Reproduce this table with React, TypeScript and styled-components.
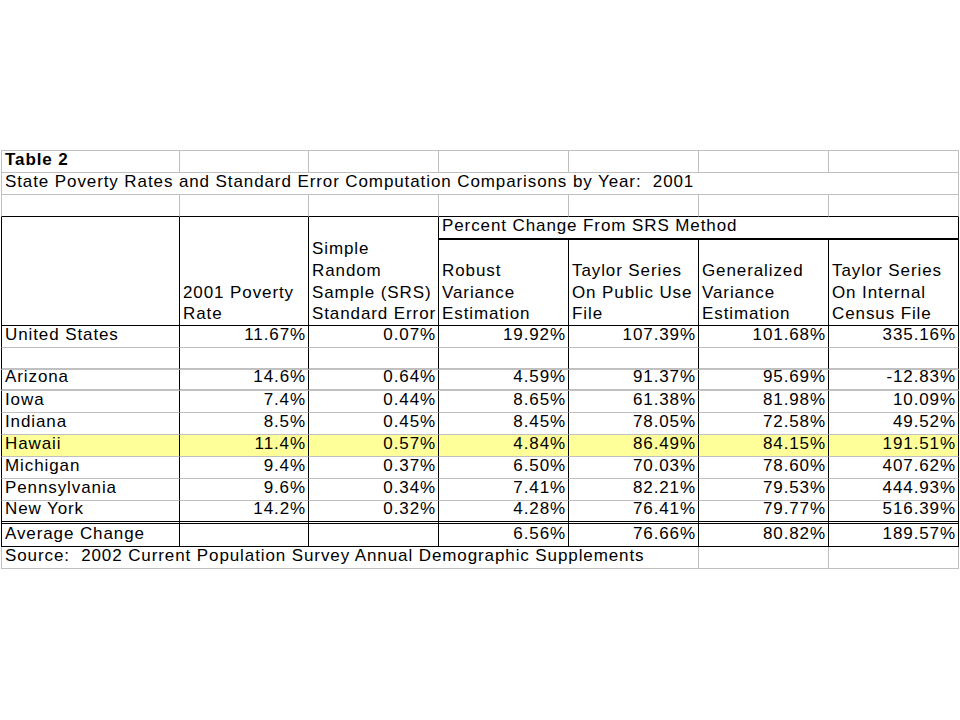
import React from "react";
import styled, { createGlobalStyle } from "styled-components";

type Edge = "g" | "g2" | "k" | "k2" | "dbl" | "none";

const edgeCss = (e: Edge = "none") => {
  switch (e) {
    case "g":
      return "1px solid #c0c0c0";
    case "g2":
      return "2px solid #c0c0c0";
    case "k":
      return "1px solid #000";
    case "k2":
      return "2px solid #000";
    case "dbl":
      return "3px double #000";
    default:
      return "0";
  }
};

///////////////////////
// CSS
///////////////////////
const GlobalStyle = createGlobalStyle`
  html, body {
    margin: 0;
    background: #fff;
  }
  body {
    font-family: "Liberation Sans", Arial, sans-serif;
    color: #000;
  }
`;

const Page = styled.div`
  width: 960px;
  height: 720px;
  padding: 150px 0 0 1px;
  box-sizing: border-box;
`;

const Sheet = styled.table`
  border-collapse: separate;
  border-spacing: 0;
  table-layout: fixed;
  width: 958px;
  font-size: 17px;
  letter-spacing: 0.9px;
`;

const Col = styled.col<{ $w: number }>`
  width: ${(p) => p.$w}px;
`;

const Row = styled.tr<{ $h: number; $hl?: boolean }>`
  height: ${(p) => p.$h}px;
  background: ${(p) => (p.$hl ? "#ffff99" : "transparent")};
`;

const Cell = styled.td<{
  $t?: Edge;
  $r?: Edge;
  $b?: Edge;
  $l?: Edge;
  $num?: boolean;
  $bold?: boolean;
  $head?: boolean;
}>`
  border-top: ${(p) => edgeCss(p.$t)};
  border-right: ${(p) => edgeCss(p.$r)};
  border-bottom: ${(p) => edgeCss(p.$b)};
  border-left: ${(p) => edgeCss(p.$l)};
  padding: 0 ${(p) => (p.$num ? "2px" : "3px")} ${(p) => (p.$head ? "0" : "5px")} 3px;
  line-height: ${(p) => (p.$head ? "21.7px" : "14px")};
  vertical-align: bottom;
  text-align: ${(p) => (p.$num ? "right" : "left")};
  font-weight: ${(p) => (p.$bold ? 700 : 400)};
  white-space: nowrap;
  overflow: visible;
`;
///////////////////////
// end CSS
///////////////////////

const unitedStates = ["United States", "11.67%", "0.07%", "19.92%", "107.39%", "101.68%", "335.16%"];

const states = [
  { v: ["Arizona", "14.6%", "0.64%", "4.59%", "91.37%", "95.69%", "-12.83%"], h: 21, b: "g2" as Edge },
  { v: ["Iowa", "7.4%", "0.44%", "8.65%", "61.38%", "81.98%", "10.09%"], h: 22, b: "g" as Edge },
  { v: ["Indiana", "8.5%", "0.45%", "8.45%", "78.05%", "72.58%", "49.52%"], h: 22, b: "g" as Edge },
  { v: ["Hawaii", "11.4%", "0.57%", "4.84%", "86.49%", "84.15%", "191.51%"], h: 22, b: "g" as Edge, hl: true },
  { v: ["Michigan", "9.4%", "0.37%", "6.50%", "70.03%", "78.60%", "407.62%"], h: 22, b: "g" as Edge },
  { v: ["Pennsylvania", "9.6%", "0.34%", "7.41%", "82.21%", "79.53%", "444.93%"], h: 22, b: "g" as Edge },
  { v: ["New York", "14.2%", "0.32%", "4.28%", "76.41%", "79.77%", "516.39%"], h: 23, b: "dbl" as Edge },
];

const averageChange = ["Average Change", "", "", "6.56%", "76.66%", "80.82%", "189.57%"];

const subHeads = [
  ["Robust", "Variance", "Estimation"],
  ["Taylor Series", "On Public Use", "File"],
  ["Generalized", "Variance", "Estimation"],
  ["Taylor Series", "On Internal", "Census File"],
];

const widths = [179, 129, 130, 130, 130, 130, 130];

const Lines = ({ lines }: { lines: string[] }) => (
  <>
    {lines.map((l, i) => (
      <React.Fragment key={i}>
        {i > 0 && <br />}
        {l}
      </React.Fragment>
    ))}
  </>
);

const DataRow = ({ values, h, b, hl }: { values: string[]; h: number; b: Edge; hl?: boolean }) => (
  <Row $h={h} $hl={hl}>
    {values.map((v, i) => (
      <Cell key={i} $l={i === 0 ? "k" : "none"} $r="k" $b={b} $num={i > 0}>
        {v}
      </Cell>
    ))}
  </Row>
);

const App = () => {
  return (
    <Page>
      <GlobalStyle />
      <Sheet>
        <colgroup>
          {widths.map((w, i) => (
            <Col key={i} $w={w} />
          ))}
        </colgroup>
        <tbody>
          {/* title rows */}
          <Row $h={23}>
            {widths.map((_, i) => (
              <Cell key={i} $t="g" $l={i === 0 ? "g" : "none"} $r="g" $b="g" $bold={i === 0}>
                {i === 0 ? "Table 2" : ""}
              </Cell>
            ))}
          </Row>
          <Row $h={22}>
            <Cell colSpan={7} $l="g" $r="g" $b="g">
              State Poverty Rates and Standard Error Computation Comparisons by Year:{"\u00a0\u00a0"}2001
            </Cell>
          </Row>
          <Row $h={22}>
            {widths.map((_, i) => (
              <Cell key={i} $l={i === 0 ? "g" : "none"} $r="g" $b="k" />
            ))}
          </Row>

          {/* column headers */}
          <Row $h={23}>
            <Cell rowSpan={2} $l="k" $r="k" $b="k" />
            <Cell rowSpan={2} $r="k" $b="k" $head>
              <Lines lines={["2001 Poverty", "Rate"]} />
            </Cell>
            <Cell rowSpan={2} $r="k" $b="k" $head>
              <Lines lines={["Simple", "Random", "Sample (SRS)", "Standard Error"]} />
            </Cell>
            <Cell colSpan={4} $r="k" $b="k2">
              Percent Change From SRS Method
            </Cell>
          </Row>
          <Row $h={86}>
            {subHeads.map((s, i) => (
              <Cell key={i} $r="k" $b="k" $head>
                <Lines lines={s} />
              </Cell>
            ))}
          </Row>

          {/* data */}
          <DataRow values={unitedStates} h={22} b="g" />
          <DataRow values={["", "", "", "", "", "", ""]} h={22} b="g2" />
          {states.map((s) => (
            <DataRow key={s.v[0]} values={s.v} h={s.h} b={s.b} hl={s.hl} />
          ))}
          <DataRow values={averageChange} h={23} b="k" />

          {/* source */}
          <Row $h={22}>
            <Cell colSpan={5} $l="g" $r="g" $b="g">
              Source:{"\u00a0\u00a0"}2002 Current Population Survey Annual Demographic Supplements
            </Cell>
            <Cell $r="g" $b="g" />
            <Cell $r="g" $b="g" />
          </Row>
        </tbody>
      </Sheet>
    </Page>
  );
};

export default App;
